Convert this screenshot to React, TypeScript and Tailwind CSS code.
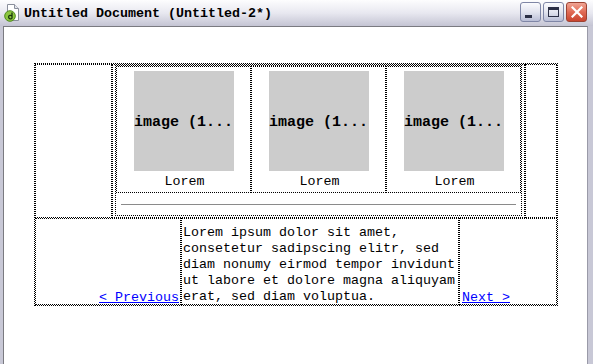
import React from "react"

const cellText = "text-[13.333px] leading-4"

function DwIcon() {
  return (
    <svg width="17" height="18" viewBox="0 0 17 18">
      <path d="M3.5 0.5h7l4 4v12h-11z" fill="#ffffff" stroke="#8a8f9c" />
      <path d="M10.5 0.5v4h4" fill="#e4e6ee" stroke="#8a8f9c" />
      <circle cx="6" cy="12" r="5.3" fill="#8cc63f" stroke="#4f8a1c" />
      <path d="M8 8.5v6M8 14.5c-1 0.6-3.4 0.6-3.4-1.4s2.2-2.2 3.4-1.2" fill="none" stroke="#17360b" strokeWidth="1.3" />
    </svg>
  )
}

function TitleButton({ kind }: { kind: "min" | "max" | "close" }) {
  const isClose = kind === "close"
  return (
    <div
      className={`w-[21px] h-[20px] rounded-[3px] border flex items-center justify-center ${
        isClose
          ? "border-[#9c4232] bg-gradient-to-b from-[#f0a494] via-[#e06a54] to-[#c9442e]"
          : "border-[#7f86a6] bg-gradient-to-b from-[#fbfbfe] via-[#e2e4ef] to-[#b9bed6]"
      }`}
    >
      {kind === "min" && <div className="w-[7px] h-[3px] bg-[#2b2f45] mt-[8px] mr-[4px]" />}
      {kind === "max" && <div className="w-[11px] h-[10px] border border-[#2b2f45] border-t-[3px]" />}
      {isClose && (
        <svg width="12" height="12" viewBox="0 0 12 12">
          <path d="M1.5 1.5l9 9M10.5 1.5l-9 9" stroke="#ffffff" strokeWidth="2.2" strokeLinecap="square" />
        </svg>
      )}
    </div>
  )
}

function ImageCell() {
  return (
    <div className="w-[135px] h-[127px] border border-dotted border-black flex flex-col items-center pt-[4px]">
      <div className="w-[100px] h-[100px] bg-[#cccccc] flex items-center justify-center overflow-hidden pt-[5px]">
        <span className="text-[15px] font-bold text-black whitespace-nowrap">image (1...</span>
      </div>
      <div className={`${cellText} text-black ml-[2px] mt-[3px]`}>Lorem</div>
    </div>
  )
}

export default function App() {
  return (
    <div className="w-[593px] h-[364px] overflow-hidden bg-[#c8c8d6] font-['Liberation_Mono',monospace]">
      <div className="h-[26px] flex items-center bg-gradient-to-b from-[#fdfdfe] via-[#e8e8f0] to-[#c4c4d3] pl-[4px] pr-[6px]">
        <DwIcon />
        <span className="ml-[3px] mt-[1px] text-[13.333px] font-bold text-black leading-none">
          Untitled Document (Untitled-2*)
        </span>
        <div className="ml-auto flex gap-[2px] mt-[-2px]">
          <TitleButton kind="min" />
          <TitleButton kind="max" />
          <TitleButton kind="close" />
        </div>
      </div>
      <div className="flex h-[338px]">
        <div className="w-[3px] bg-[#c8c8d6]" />
        <div className="w-[585px] bg-white border-l border-t border-r border-l-[#7a7a80] border-t-[#7a7a80] border-r-[#9a9aa8] pl-[30px] pt-[36px]">
          <div className="w-[524px] border border-dotted border-black flex flex-col">
            <div className="flex h-[154px]">
              <div className="w-[77px] border border-dotted border-black" />
              <div className="w-[413px] border border-dotted border-black pl-[2px]">
                <div className="w-[407px] h-[151px] border border-dotted border-black flex flex-col">
                  <div className="flex">
                    <ImageCell />
                    <ImageCell />
                    <ImageCell />
                  </div>
                  <div className="h-[22px] pt-[11px] px-[5px]">
                    <div className="h-px bg-[#8a8a8a]" />
                  </div>
                </div>
              </div>
              <div className="w-[32px] border border-dotted border-black" />
            </div>
            <div className="flex h-[87px]">
              <div className="w-[146px] border border-dotted border-black flex items-end justify-end pr-px">
                <a href="#" className={`${cellText} text-[#0000ff] underline mb-[-2px]`}>
                  &lt; Previous
                </a>
              </div>
              <div className={`w-[278px] border border-dotted border-black pl-px pt-[6px] text-black ${cellText}`}>
                Lorem ipsum dolor sit amet, consetetur sadipscing elitr, sed diam nonumy eirmod tempor invidunt ut
                labore et dolore magna aliquyam erat, sed diam voluptua.
              </div>
              <div className="w-[98px] border border-dotted border-black flex items-end pl-[2px]">
                <a href="#" className={`${cellText} text-[#0000ff] underline mb-[-2px]`}>
                  Next &gt;
                </a>
              </div>
            </div>
          </div>
        </div>
        <div className="w-[5px] bg-[#c8c8d6]" />
      </div>
    </div>
  )
}
